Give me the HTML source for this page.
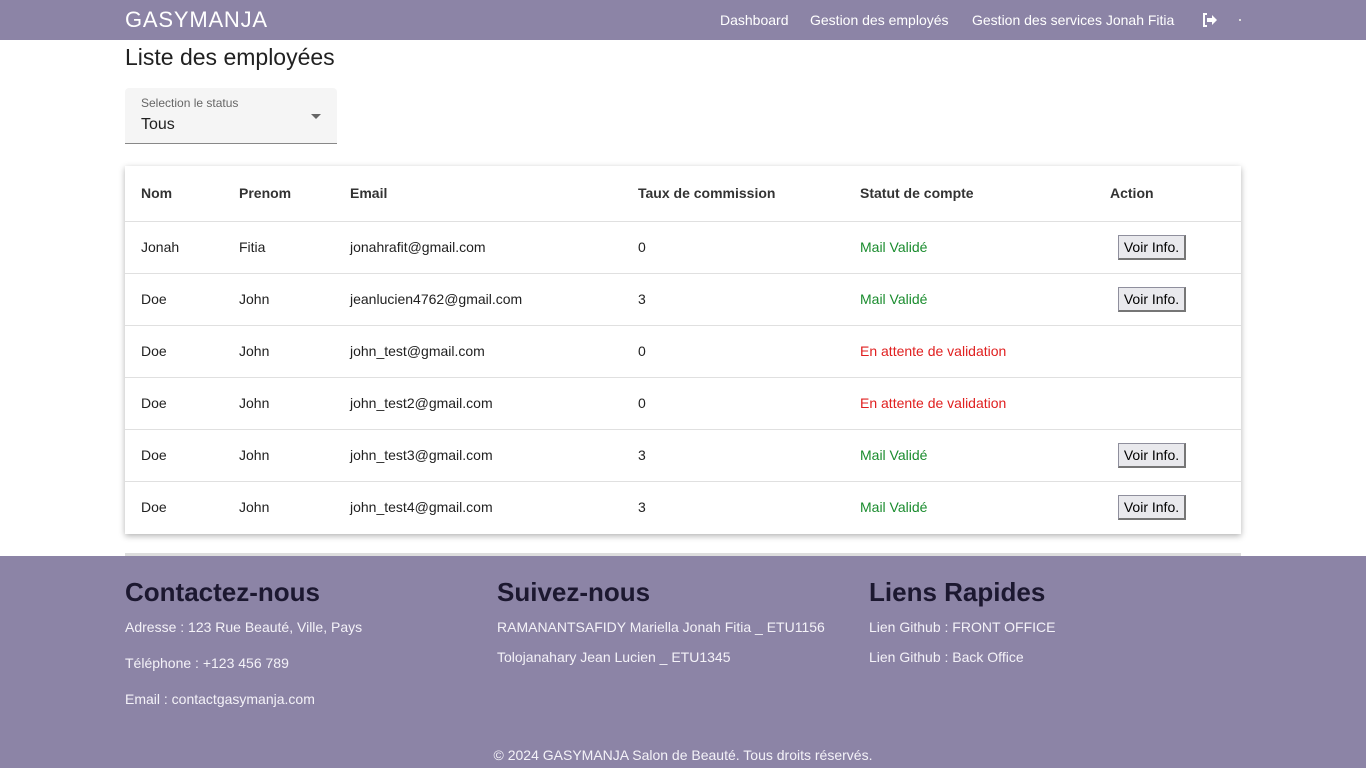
<!DOCTYPE html>
<html><head><meta charset="utf-8"><style>
*{box-sizing:border-box;margin:0;padding:0}
body{width:1366px;height:768px;overflow:hidden;font-family:"Liberation Sans",Roboto,sans-serif;background:#fff;position:relative;color:#212121}
.nav{position:absolute;top:0;left:0;width:1366px;height:40px;background:#8c84a6;color:#fff}
.brand{position:absolute;left:125px;top:7px;font-size:22px;letter-spacing:.8px}
.links{position:absolute;top:12px;font-size:14px;color:#fff}
h1{position:absolute;left:125px;top:44px;font-size:23px;font-weight:400;color:#212121}
.sel{position:absolute;left:125px;top:88px;width:212px;height:56px;background:#f5f5f5;border-bottom:1px solid #888;border-radius:4px 4px 0 0}
.sel .l{position:absolute;left:16px;top:8px;font-size:12px;color:#666}
.sel .v{position:absolute;left:16px;top:28px;font-size:16px;color:#212121}
.sel .a{position:absolute;left:186px;top:26px;width:0;height:0;border-left:5px solid transparent;border-right:5px solid transparent;border-top:5px solid #666}
.card{position:absolute;left:125px;top:166px;width:1116px;height:368px;background:#fff;box-shadow:0 2px 6px rgba(0,0,0,.3)}
.row{position:absolute;left:0;width:1116px;height:52px;border-top:1px solid #e0e0e0;font-size:14px}
.row span{position:absolute;top:17px}
.h{font-weight:bold;border:none;height:55px;color:#333}
.h span{top:19px}
.g{color:#1a8c2e}.r{color:#e02020}
.btn{position:absolute;left:993px;top:13px;width:68px;height:25px;background:#e9e9ed;border:1px solid #8f8f9d;border-right:2px solid #767676;border-bottom:2px solid #767676;font-size:14px;color:#000;text-align:center;line-height:22px}
.foot{position:absolute;left:0;top:556px;width:1366px;height:212px;background:#8c84a6;color:#fff}
.sep{position:absolute;left:125px;top:553px;width:1116px;height:3px;background:#ddd}
.foot h2{position:absolute;top:21px;font-size:26px;color:#1c1830;font-weight:bold}
.foot p{position:absolute;font-size:14px;color:#f4f2f8}
</style></head><body>
<div class="nav"><div class="brand">GASYMANJA</div>
<span class="links" style="left:720px">Dashboard</span>
<span class="links" style="left:810px">Gestion des employés</span>
<span class="links" style="left:972px">Gestion des services Jonah Fitia</span>
<svg style="position:absolute;left:1202px;top:13px" width="16" height="14" viewBox="0 0 16 14"><path d="M5 1H2v12h3" fill="none" stroke="#fff" stroke-width="2"/><path d="M5 5h5V2l5 5-5 5V9H5z" fill="#fff"/></svg>
<div style="position:absolute;left:1239px;top:19px;width:2px;height:2px;background:#ddd"></div>
</div>
<h1>Liste des employées</h1>
<div class="sel"><div class="l">Selection le status</div><div class="v">Tous</div><div class="a"></div></div>
<div class="card">
<div class="row h" style="top:0"><span style="left:16px">Nom</span><span style="left:114px">Prenom</span><span style="left:225px">Email</span><span style="left:513px">Taux de commission</span><span style="left:735px">Statut de compte</span><span style="left:985px">Action</span></div>
<div class="row" style="top:55px"><span style="left:16px">Jonah</span><span style="left:114px">Fitia</span><span style="left:225px">jonahrafit@gmail.com</span><span style="left:513px">0</span><span class="g" style="left:735px">Mail Validé</span><div class="btn">Voir Info.</div></div>
<div class="row" style="top:107px"><span style="left:16px">Doe</span><span style="left:114px">John</span><span style="left:225px">jeanlucien4762@gmail.com</span><span style="left:513px">3</span><span class="g" style="left:735px">Mail Validé</span><div class="btn">Voir Info.</div></div>
<div class="row" style="top:159px"><span style="left:16px">Doe</span><span style="left:114px">John</span><span style="left:225px">john_test@gmail.com</span><span style="left:513px">0</span><span class="r" style="left:735px">En attente de validation</span></div>
<div class="row" style="top:211px"><span style="left:16px">Doe</span><span style="left:114px">John</span><span style="left:225px">john_test2@gmail.com</span><span style="left:513px">0</span><span class="r" style="left:735px">En attente de validation</span></div>
<div class="row" style="top:263px"><span style="left:16px">Doe</span><span style="left:114px">John</span><span style="left:225px">john_test3@gmail.com</span><span style="left:513px">3</span><span class="g" style="left:735px">Mail Validé</span><div class="btn">Voir Info.</div></div>
<div class="row" style="top:315px"><span style="left:16px">Doe</span><span style="left:114px">John</span><span style="left:225px">john_test4@gmail.com</span><span style="left:513px">3</span><span class="g" style="left:735px">Mail Validé</span><div class="btn">Voir Info.</div></div>
</div>
<div class="sep"></div>
<div class="foot">
<h2 style="left:125px">Contactez-nous</h2>
<p style="left:125px;top:63px">Adresse : 123 Rue Beauté, Ville, Pays</p>
<p style="left:125px;top:99px">Téléphone : +123 456 789</p>
<p style="left:125px;top:135px">Email : contactgasymanja.com</p>
<h2 style="left:497px">Suivez-nous</h2>
<p style="left:497px;top:63px">RAMANANTSAFIDY Mariella Jonah Fitia _ ETU1156</p>
<p style="left:497px;top:93px">Tolojanahary Jean Lucien _ ETU1345</p>
<h2 style="left:869px">Liens Rapides</h2>
<p style="left:869px;top:63px">Lien Github : FRONT OFFICE</p>
<p style="left:869px;top:93px">Lien Github : Back Office</p>
<p style="left:0;width:1366px;text-align:center;top:191px">© 2024 GASYMANJA Salon de Beauté. Tous droits réservés.</p>
</div>
</body></html>
